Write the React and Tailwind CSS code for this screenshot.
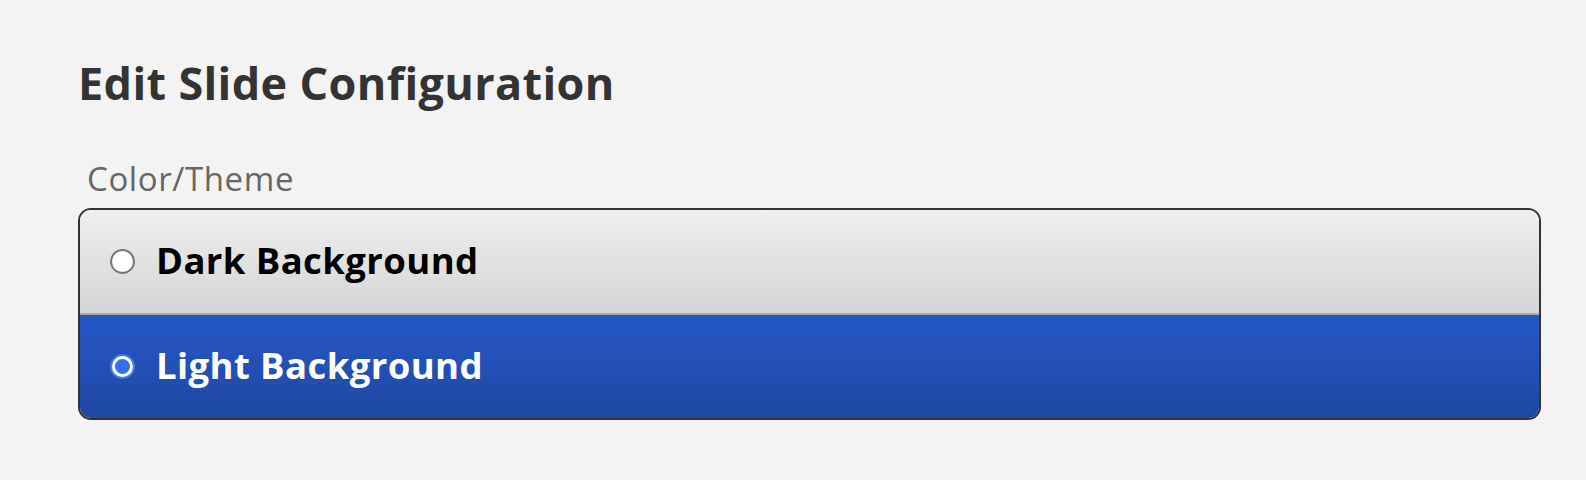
import React, { useState } from 'react';

const options = [
    { id: 'dark', label: 'Dark Background' },
    { id: 'light', label: 'Light Background' },
];

const Radio = ({ checked }) =>
    checked ? (
        <span className="w-[25px] h-[25px] rounded-full bg-[#3d7cf2] p-[2px] flex shrink-0">
            <span className="w-full h-full rounded-full border-[3px] border-white bg-[#3170f0]" />
        </span>
    ) : (
        <span className="w-[25px] h-[25px] rounded-full bg-white border-2 border-[#777777] shrink-0" />
    );

const App = () => {
    const [theme, setTheme] = useState('light');

    return (
        <div className="w-[1586px] h-[480px] bg-[#f3f3f3] pl-[78px] pt-[60px] font-['Open_Sans',sans-serif]">
            <h1 className="text-[45px] leading-[45px] font-bold tracking-[0.35px] text-[#333333]">Edit Slide Configuration</h1>

            <div className="mt-[57px] ml-[9px] text-[33px] leading-[33px] tracking-[0.6px] text-[#666666]">Color/Theme</div>

            <div className="mt-[13px] w-[1463px] border-2 border-[#333333] rounded-[13px] overflow-hidden">
                {options.map((opt, i) => {
                    const active = theme === opt.id;
                    return (
                        <button
                            key={opt.id}
                            onClick={() => setTheme(opt.id)}
                            className={
                                'w-full flex items-center gap-[21px] pl-[30px] text-left ' +
                                (active
                                    ? 'bg-gradient-to-b from-[#2558c7] to-[#1f48a3] text-white'
                                    : 'bg-gradient-to-b from-[#efefef] to-[#d5d5d5] text-black') +
                                (i === 0 ? ' border-b-2 border-[#a9a9a9] h-[105px]' : ' h-[103px]')
                            }
                        >
                            <Radio checked={active} />
                            <span className="text-[36.5px] leading-none font-bold tracking-[0.4px] pb-[2px]">{opt.label}</span>
                        </button>
                    );
                })}
            </div>
        </div>
    );
};

export default App;
